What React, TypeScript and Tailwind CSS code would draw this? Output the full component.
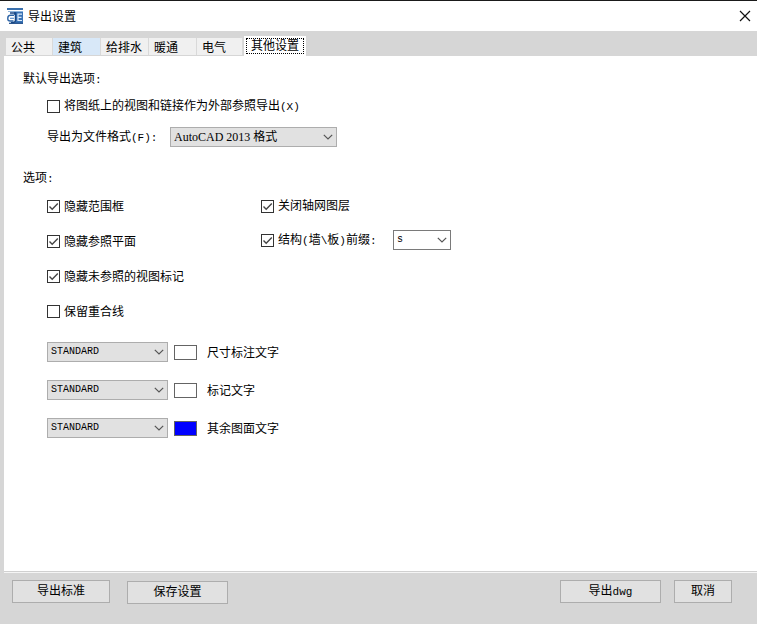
import React, { useState } from "react";

const TABS = [
  { name: "公共", width: "w-[47px]" },
  { name: "建筑", width: "w-[48px]" },
  { name: "给排水", width: "w-[48px]" },
  { name: "暖通", width: "w-[48px]" },
  { name: "电气", width: "w-[46px]" },
];

function Latin({ children }: { children: React.ReactNode }) {
  return (
    <span className="whitespace-pre font-['Liberation_Mono',monospace] text-[11px] leading-none">{children}</span>
  );
}

function CheckBox({
  id,
  checked = false,
  children,
}: {
  id: string;
  checked?: boolean;
  children: React.ReactNode;
}) {
  return (
    <div className="flex items-center gap-1">
      <span className="grid size-[13px] shrink-0">
        <input
          id={id}
          type="checkbox"
          defaultChecked={checked}
          className="peer col-start-1 row-start-1 size-[13px] appearance-none border border-[#333] bg-white"
        />
        <svg
          viewBox="0 0 13 13"
          className="pointer-events-none invisible col-start-1 row-start-1 size-[13px] peer-checked:visible"
          fill="none"
          stroke="#444"
          strokeWidth="1.4"
        >
          <path d="M2.5 6.5 L5.2 9.2 L10.8 3.6" />
        </svg>
      </span>
      <label htmlFor={id} className="h-[18px] whitespace-nowrap">
        {children}
      </label>
    </div>
  );
}

function Select({
  id,
  label,
  options,
  className,
}: {
  id: string;
  label?: string;
  options: string[];
  className: string;
}) {
  return (
    <span className={"grid h-5 shrink-0 items-center border " + className}>
      <select
        id={id}
        aria-label={label}
        className="col-start-1 row-start-1 h-[18px] w-full appearance-none bg-transparent pr-5 pl-[3px] leading-4"
      >
        {options.map((o) => (
          <option key={o}>{o}</option>
        ))}
      </select>
      <svg
        viewBox="0 0 10 6"
        className="pointer-events-none col-start-1 row-start-1 mr-[3px] h-[6px] w-[10px] justify-self-end"
        fill="none"
        stroke="#555"
        strokeWidth="1.2"
      >
        <path d="M0.8 0.8 L5 5 L9.2 0.8" />
      </svg>
    </span>
  );
}

function TextStyle({ id, name, color }: { id: string; name: string; color: string }) {
  return (
    <div className="flex h-[38px] items-center">
      <Select
        id={id}
        options={["STANDARD"]}
        className="w-[121px] border-[#adadad] bg-[#e1e1e1] font-['Liberation_Mono',monospace] text-[10px]"
      />
      <button
        type="button"
        aria-label={name + "颜色"}
        className={"ml-1.5 h-[15px] w-[23px] border border-[#646464] " + color}
      />
      <label htmlFor={id} className="ml-2.5">
        {name}
      </label>
    </div>
  );
}

function PushButton({ width, children }: { width: string; children: React.ReactNode }) {
  return (
    <button
      type="button"
      className={"flex h-[23px] items-start justify-center border border-[#adadad] bg-[#e1e1e1] pt-px leading-4 " + width}
    >
      <span className="h-4">{children}</span>
    </button>
  );
}

export default function App() {
  const [active, setActive] = useState("其他设置");
  return (
    <div className="flex min-h-screen flex-col bg-[#d6d6d6] font-['Noto_Sans_CJK_SC',sans-serif] text-[12px] leading-4 text-black">
      <header className="flex h-[31px] items-center border-t border-[#1a1a1a] bg-white pr-1.5 pl-[7px]">
        <svg viewBox="0 0 16 16" className="size-4" fill="none">
          <path d="M0 0H16V2H0Z" fill="#3a70ad" />
          <path d="M1 3.5H16" stroke="#8db4dc" strokeWidth="1" />
          <path d="M7 4H16V15H7C9 13 9 12 9 7H7Z" fill="#3a73b5" />
          <path d="M3 5H8.5V12Q8.5 15 4 14.5" stroke="#174684" strokeWidth="1.5" />
          <path d="M7 7.3H3.5Q0.8 7.3 0.8 10V11Q0.8 13 3.2 13H6.5" stroke="#2c64a6" strokeWidth="1.4" />
          <path d="M3 10.3H7" stroke="#5e94cd" strokeWidth="1.2" />
          <path d="M15 6.2H11V12.5H15M11 9.4H14.5" stroke="#dcebfa" strokeWidth="1.2" />
          <path d="M2 15.3H16" stroke="#174684" strokeWidth="1.2" />
        </svg>
        <h1 className="ml-[5px] flex-1">导出设置</h1>
        <button type="button" aria-label="关闭" className="flex size-3 items-center justify-center">
          <svg viewBox="0 0 12 12" className="size-3" fill="none" stroke="#111" strokeWidth="1.2">
            <path d="M1 1L11 11M11 1L1 11" />
          </svg>
        </button>
      </header>

      <nav className="flex h-[25px] items-end pl-1.5" role="tablist">
        {TABS.map((t) => (
          <button
            key={t.name}
            type="button"
            role="tab"
            aria-selected={active === t.name}
            onClick={() => setActive(t.name)}
            className={
              "mb-px h-[17px] border-r border-[#d9d9d9] pl-[5px] text-left " +
              t.width +
              (t.name === "建筑" ? " bg-[#d8e8f8]" : " bg-[#f0f0f0]")
            }
          >
            {t.name}
          </button>
        ))}
        <button
          type="button"
          role="tab"
          aria-selected={active === "其他设置"}
          onClick={() => setActive("其他设置")}
          className="ml-px h-5 w-[62px] bg-white p-0.5"
        >
          <span className="flex h-4 items-center justify-center border border-dotted border-black pb-0.5">
            其他设置
          </span>
        </button>
      </nav>

      <main className="ml-1 flex-1 border-b border-[#d0d0d0] bg-white pt-3.5 pl-[19px]">
        <h2 className="h-4">
          默认导出选项<Latin>:</Latin>
        </h2>
        <div className="pt-[11px] pl-6">
          <CheckBox id="xref">
            将图纸上的视图和链接作为外部参照导出<Latin>(X)</Latin>
          </CheckBox>
          <div className="mt-3 flex items-center">
            <label htmlFor="format" className="h-[18px] w-[123px]">
              导出为文件格式<Latin>(F):</Latin>
            </label>
            <Select
              id="format"
              options={["AutoCAD 2013 格式"]}
              className="w-[167px] border-[#adadad] bg-[#e1e1e1] font-['Liberation_Serif','Noto_Sans_CJK_SC',serif]"
            />
          </div>
        </div>

        <h2 className="mt-[22px] h-4">
          选项<Latin>:</Latin>
        </h2>
        <div className="mt-1 flex pl-6">
          <div className="grid w-[214px] auto-rows-[35px] items-center">
            <CheckBox id="scope" checked>
              隐藏范围框
            </CheckBox>
            <CheckBox id="refplane" checked>
              隐藏参照平面
            </CheckBox>
            <CheckBox id="unref" checked>
              隐藏未参照的视图标记
            </CheckBox>
            <CheckBox id="overlap">保留重合线</CheckBox>
          </div>
          <div className="grid auto-rows-[34px] content-start items-center">
            <CheckBox id="grid" checked>
              关闭轴网图层
            </CheckBox>
            <div className="flex items-center">
              <div className="w-[132px]">
                <CheckBox id="prefix" checked>
                  结构<Latin>(</Latin>墙<Latin>\</Latin>板<Latin>)</Latin>前缀<Latin>:</Latin>
                </CheckBox>
              </div>
              <Select
                id="prefix-value"
                label="前缀"
                options={["s"]}
                className="w-[58px] border-[#7a7a7a] bg-white font-['Liberation_Mono',monospace] text-[10px]"
              />
            </div>
          </div>
        </div>

        <div className="mt-1 pl-6">
          <TextStyle id="dim" name="尺寸标注文字" color="bg-white" />
          <TextStyle id="tag" name="标记文字" color="bg-white" />
          <TextStyle id="other" name="其余图面文字" color="bg-[#0000ff]" />
        </div>
      </main>

      <footer className="ml-1 flex h-[52px] border-t border-[#f5f5f5] pt-[7px] pr-[25px] pl-2">
        <PushButton width="w-[98px]">导出标准</PushButton>
        <div className="mt-px ml-[17px]">
          <PushButton width="w-[101px]">保存设置</PushButton>
        </div>
        <div className="ml-auto flex gap-[13px]">
          <PushButton width="w-[101px]">
            导出<Latin>dwg</Latin>
          </PushButton>
          <PushButton width="w-[58px]">取消</PushButton>
        </div>
      </footer>
    </div>
  );
}
